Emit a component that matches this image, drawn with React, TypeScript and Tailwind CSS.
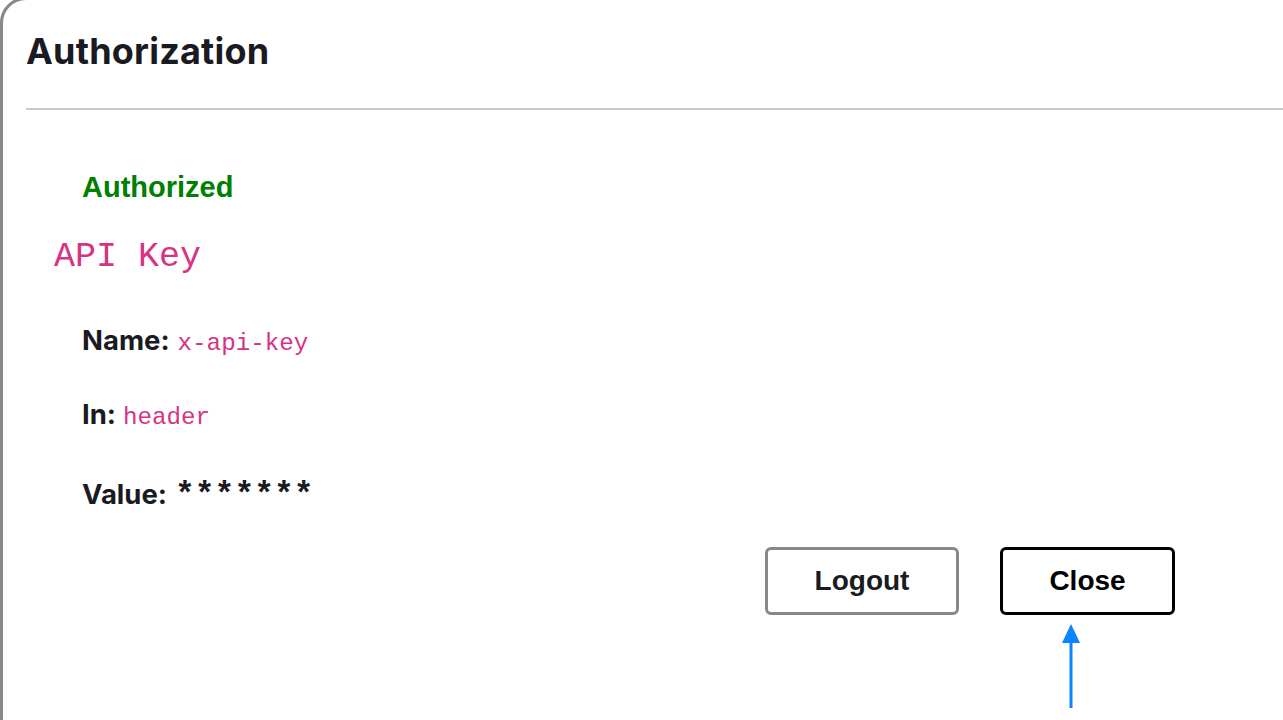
import React from "react";

export default function App() {
  return (
    <div className="relative w-[1283px] h-[720px] overflow-hidden bg-white">
      <div className="mt-[-3px] h-[760px] w-[1320px] border-[3px] border-[#888888] rounded-tl-[26px] bg-white">
        <div className="pl-[23px] pt-[29px]">
          <h3
            className="text-[36px] leading-[44px] font-bold text-[#1a1b22] tracking-[0.2px]"
            style={{ fontFamily: "Inter, 'Liberation Sans', sans-serif" }}
          >
            Authorization
          </h3>
          <div className="mt-[35px] h-[2px] bg-[#c8c8c8]" />
          <div className="pl-[28px] pr-[24px]">
            <div className="pl-[28px] pt-[61px]">
              <h4
                className="text-[29px] leading-[32px] font-bold text-[#008000]"
                style={{ fontFamily: "'Liberation Sans', Arial, sans-serif" }}
              >
                Authorized
              </h4>
            </div>
            <h4
              className="mt-[34px] text-[35px] leading-[40px] text-[#d63384]"
              style={{ fontFamily: "'Liberation Mono', 'Courier New', monospace" }}
            >
              API Key
            </h4>
            <div className="pl-[28px]" style={{ fontFamily: "Inter, 'Liberation Sans', sans-serif" }}>
              <p className="mt-[48px] flex items-baseline text-[27.5px] leading-[30px] font-bold text-[#1a1b22]">
                Name:
                <code
                  className="ml-[8px] text-[24.2px] font-normal text-[#d63384]"
                  style={{ fontFamily: "'Liberation Mono', 'Courier New', monospace" }}
                >
                  x-api-key
                </code>
              </p>
              <p className="mt-[40px] flex items-baseline text-[27.5px] leading-[30px] font-bold text-[#1a1b22]">
                In:
                <code
                  className="ml-[7px] text-[24.2px] font-normal text-[#d63384]"
                  style={{ fontFamily: "'Liberation Mono', 'Courier New', monospace" }}
                >
                  header
                </code>
              </p>
              <p className="mt-[46px] flex items-baseline text-[27.5px] leading-[30px] font-bold text-[#1a1b22]">
                Value:
                <span
                  className="ml-[8px] text-[33px] font-bold text-[#1a1b22]"
                  style={{ fontFamily: "'Liberation Mono', 'Courier New', monospace" }}
                >
                  *******
                </span>
              </p>
            </div>
          </div>
          <div className="mt-[36px] flex pl-[739px] gap-[41px]">
            <button
              className="w-[194px] h-[68px] rounded-[6px] border-[3px] border-[#888888] bg-white text-[28px] font-bold text-[#1a1b22]"
              style={{ fontFamily: "'Liberation Sans', Arial, sans-serif" }}
            >
              Logout
            </button>
            <button
              className="w-[175px] h-[68px] rounded-[6px] border-[3px] border-black bg-white text-[28px] font-bold text-black"
              style={{ fontFamily: "'Liberation Sans', Arial, sans-serif" }}
            >
              Close
            </button>
          </div>
        </div>
      </div>
      <svg className="absolute left-[1058px] top-[622px]" width="26" height="90" viewBox="0 0 26 90">
        <path d="M13 2 L22 21 L4 21 Z" fill="#0a84ff" />
        <rect x="11.5" y="18" width="3" height="68" fill="#0a84ff" />
      </svg>
    </div>
  );
}
